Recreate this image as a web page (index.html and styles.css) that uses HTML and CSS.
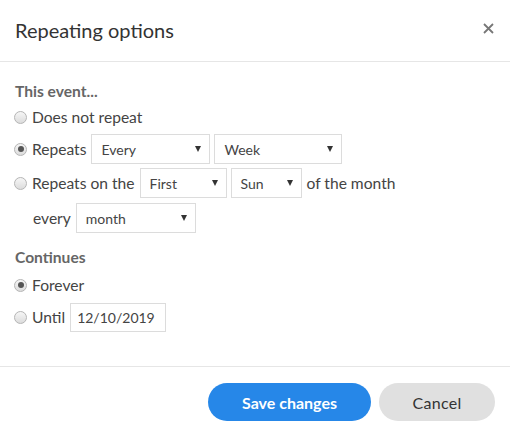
FILE: index.html
```html
<!DOCTYPE html>
<html>
<head>
<meta charset="utf-8">
<link rel="stylesheet" href="styles.css">
</head>
<body>
<div class="modal">
  <div class="modal-header">
    <h1 class="title">Repeating options</h1>
    <button class="close" aria-label="Close">
      <svg width="11" height="11" viewBox="0 0 11 11"><path d="M1 1L10 10M10 1L1 10" stroke="#777" stroke-width="1.8" fill="none"/></svg>
    </button>
  </div>
  <div class="modal-body">
    <div class="heading">This event...</div>
    <div class="row row-plain"><span class="radio"></span><span class="label">Does not repeat</span></div>
    <div class="row"><span class="radio checked"></span><span class="label">Repeats</span>
      <div class="select w-every"><span>Every</span><i class="caret"></i></div>
      <div class="select w-week"><span>Week</span><i class="caret"></i></div>
    </div>
    <div class="row"><span class="radio"></span><span class="label">Repeats on the</span>
      <div class="select w-first"><span>First</span><i class="caret"></i></div>
      <div class="select w-sun"><span>Sun</span><i class="caret"></i></div>
      <span class="label">of the month</span>
    </div>
    <div class="row indent"><span class="label">every</span>
      <div class="select w-month"><span>month</span><i class="caret"></i></div>
    </div>
    <div class="heading second">Continues</div>
    <div class="row row-plain forever"><span class="radio checked"></span><span class="label">Forever</span></div>
    <div class="row"><span class="radio"></span><span class="label">Until</span>
      <div class="input">12/10/2019</div>
    </div>
  </div>
  <div class="modal-footer">
    <button class="btn btn-primary">Save changes</button>
    <button class="btn btn-default">Cancel</button>
  </div>
</div>
</body>
</html>
```

FILE: styles.css
```css
* { box-sizing: border-box; }
html, body { margin: 0; padding: 0; background: #fff; }
body {
  font-family: Lato, "Open Sans", sans-serif;
  color: #333;
  width: 510px;
  height: 436px;
  overflow: hidden;
}
.modal { width: 510px; }
.modal-header {
  height: 62px;
  border-bottom: 1px solid #e6e6e6;
  display: flex;
  align-items: center;
  justify-content: space-between;
  padding: 0 15px 0 15px;
}
.title {
  margin: 0;
  font-size: 20px;
  font-weight: 400;
  color: #333;
  line-height: 24px;
  padding-bottom: 1px;
}
.close {
  border: 0;
  background: none;
  padding: 0;
  width: 14px;
  height: 14px;
  display: flex;
  align-items: center;
  justify-content: center;
  margin-bottom: 5px;
  margin-right: 0;
}
.modal-body {
  padding: 18px 15px 34px 14px;
}
.heading {
  font-size: 15.6px;
  font-weight: 700;
  color: #666;
  line-height: 22px;
  padding-left: 1px;
}
.heading.second { margin-top: 13px; }
.row {
  display: flex;
  align-items: center;
  height: 30px;
  margin-top: 4px;
  font-size: 15.6px;
}
.row-plain { height: 26px; margin-top: 2px; }
.heading + .row-plain { margin-top: 2px; }
.row-plain.forever { margin-top: 4px; }
.indent { padding-left: 19px; margin-top: 5px; }
.radio {
  width: 13px;
  height: 13px;
  border-radius: 50%;
  border: 1px solid #b5b5b5;
  background: linear-gradient(#f6f6f6, #dcdcdc);
  margin-right: 5px;
  flex: none;
  position: relative;
}
.radio.checked::after {
  content: "";
  position: absolute;
  left: 2.5px;
  top: 2.5px;
  width: 6px;
  height: 6px;
  border-radius: 50%;
  background: #555;
}
.label { color: #444; white-space: nowrap; margin-right: 5px; }
.select {
  height: 30px;
  border: 1px solid #dcdcdc;
  display: flex;
  align-items: center;
  justify-content: space-between;
  padding: 0 8px 0 9px;
  font-size: 14px;
  color: #444;
  margin-right: 4px;
  flex: none;
}
.row .select:last-of-type { margin-right: 5px; }
.caret {
  width: 0;
  height: 0;
  border-left: 3px solid transparent;
  border-right: 3px solid transparent;
  border-top: 6px solid #333;
}
.w-every { width: 119px; }
.w-week { width: 128px; }
.w-first { width: 87px; }
.w-sun { width: 71px; }
.w-month { width: 120px; }
.input {
  height: 29px;
  width: 96px;
  border: 1px solid #dcdcdc;
  font-size: 14px;
  display: flex;
  align-items: center;
  padding-left: 6px;
  color: #444;
}
.modal-footer {
  border-top: 1px solid #e6e6e6;
  display: flex;
  justify-content: flex-end;
  gap: 8px;
  padding: 16px 15px 0 0;
}
.btn {
  height: 38px;
  border-radius: 19px;
  border: 0;
  font-family: Lato, "Open Sans", sans-serif;
  font-size: 16px;
}
.btn-primary {
  width: 163px;
  background: #2687e8;
  color: #fff;
  font-weight: 700;
}
.btn-default {
  width: 116px;
  background: #e0e0e0;
  color: #333;
  letter-spacing: 0.3px;
}
```
